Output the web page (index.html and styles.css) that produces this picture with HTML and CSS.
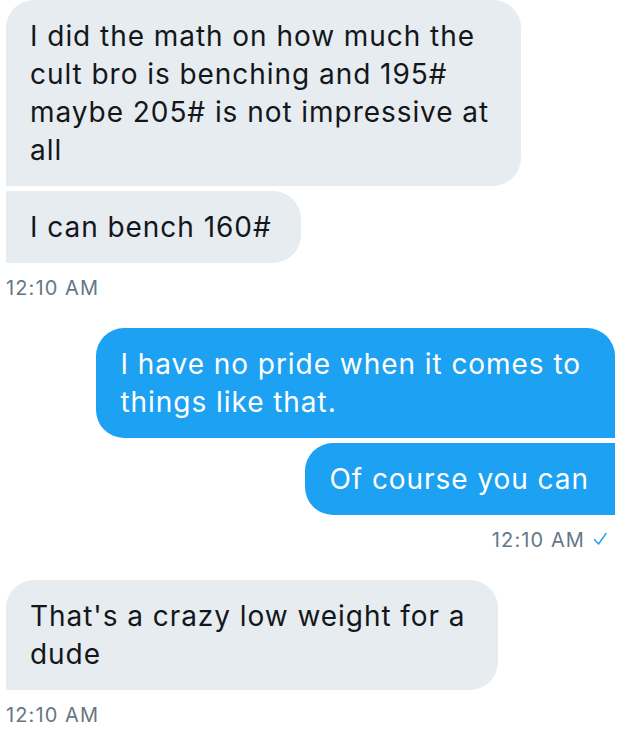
FILE: index.html
```html
<!DOCTYPE html>
<html lang="en">
<head>
<meta charset="utf-8">
<title>Messages</title>
<link rel="stylesheet" href="styles.css">
</head>
<body>
<main class="thread">
  <section class="group incoming">
    <div class="bubble first multi">I did the math on how much the<br>cult bro is benching and 195#<br>maybe 205# is not impressive at<br>all</div>
    <div class="bubble last">I can bench 160#</div>
    <div class="time">12:10 AM</div>
  </section>
  <section class="group outgoing">
    <div class="bubble first multi">I have no pride when it comes to<br>things like that.</div>
    <div class="bubble last">Of course you can</div>
    <div class="time">12:10 AM
      <svg class="check" width="14" height="14" viewBox="0 0 14 14" aria-hidden="true"><polyline points="1.5,7.5 5.5,12 13,1.5" fill="none" stroke="#1DA1F2" stroke-width="1.4" stroke-linecap="round" stroke-linejoin="round"/></svg>
    </div>
  </section>
  <section class="group incoming">
    <div class="bubble first multi">That's a crazy low weight for a<br>dude</div>
    <div class="time">12:10 AM</div>
  </section>
</main>
</body>
</html>
```

FILE: styles.css
```css
html, body {
  margin: 0;
  padding: 0;
  background: #ffffff;
}

body {
  font-family: Inter, "Open Sans", "Liberation Sans", sans-serif;
  color: #14171A;
}

.thread {
  display: flex;
  flex-direction: column;
  gap: 30px;
  padding: 0 2px 0 6px;
}

.group {
  display: flex;
  flex-direction: column;
  gap: 5px;
}

.incoming {
  align-items: flex-start;
}

.outgoing {
  align-items: flex-end;
}

.bubble {
  font-size: 28px;
  line-height: 38px;
  padding: 17px 29px 17px 24px;
  white-space: nowrap;
  letter-spacing: 0.95px;
}

.bubble.multi {
  padding-right: 32px;
}

.outgoing .bubble {
  padding-right: 26px;
}

.outgoing .bubble.multi {
  padding-right: 34px;
}

.incoming .bubble {
  background: #E6ECF0;
  color: #14171A;
  border-radius: 0 28px 28px 0;
}

.incoming .bubble.first {
  border-top-left-radius: 28px;
}

.outgoing .bubble {
  background: #1DA1F2;
  color: #ffffff;
  border-radius: 28px 0 0 28px;
}

.outgoing .bubble.first {
  border-top-right-radius: 28px;
}

.time {
  margin-top: 10px;
  font-size: 20px;
  line-height: 20px;
  letter-spacing: 1.1px;
  color: #657786;
  display: flex;
  align-items: center;
  gap: 8px;
}

.outgoing .time {
  padding-right: 8px;
}

.check {
  display: block;
  margin-top: -2px;
}
```
